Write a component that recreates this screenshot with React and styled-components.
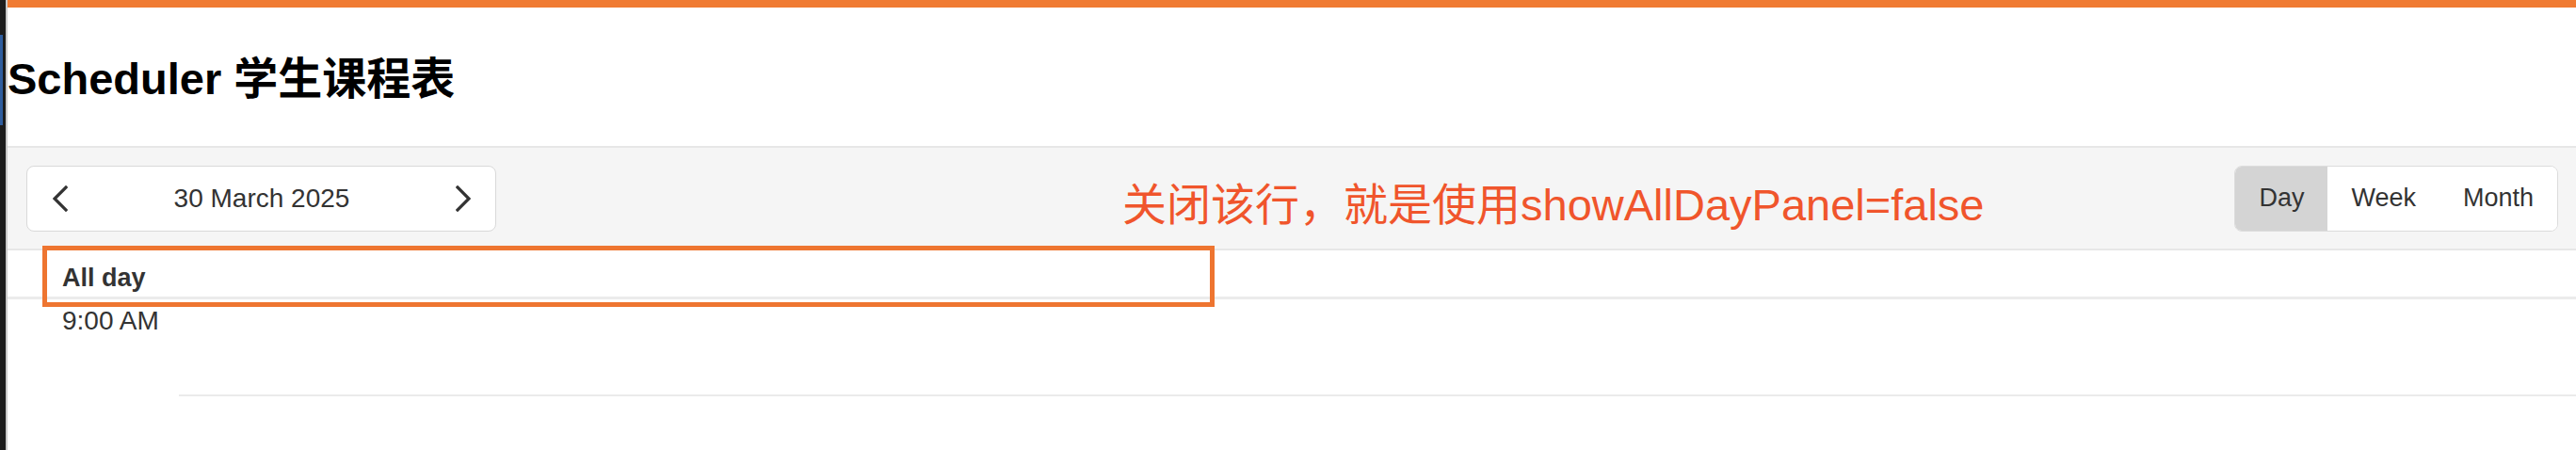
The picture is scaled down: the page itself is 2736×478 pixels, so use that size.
import React from "react";
import styled, { createGlobalStyle } from "styled-components";

const GlobalStyle = createGlobalStyle`
  html, body {
    margin: 0;
    padding: 0;
    background: #ffffff;
  }
  body {
    font-family: "Liberation Sans", "Noto Sans CJK SC", sans-serif;
    color: #333333;
  }
`;

const Page = styled.div`
  display: flex;
  width: 2736px;
  height: 478px;
  overflow: hidden;
`;

const WindowEdge = styled.div`
  width: 6px;
  flex-shrink: 0;
  background: #1c1c1c;
  position: relative;
  border-right: 2px solid #c9c9c9;
`;

const EdgeTab = styled.div`
  position: absolute;
  left: 0;
  top: 37px;
  width: 3px;
  height: 96px;
  background: #2f5d9e;
`;

const Main = styled.div`
  flex: 1;
  position: relative;
  display: flex;
  flex-direction: column;
`;

const TopBar = styled.div`
  height: 8px;
  background: #f07b33;
`;

const Header = styled.div`
  height: 147px;
  box-sizing: border-box;
  padding-top: 48px;
`;

const Title = styled.h1`
  margin: 0;
  font-size: 47px;
  line-height: 56px;
  font-weight: 700;
  color: #000000;
  font-family: "Liberation Sans", "Noto Sans CJK SC", sans-serif;
`;

const Toolbar = styled.div`
  position: relative;
  height: 111px;
  box-sizing: border-box;
  background: #f5f5f5;
  border-top: 2px solid #e7e7e7;
  border-bottom: 2px solid #e7e7e7;
  display: flex;
  align-items: center;
  justify-content: space-between;
  padding: 0 19px 0 20px;
`;

const Navigator = styled.div`
  width: 499px;
  height: 70px;
  box-sizing: border-box;
  background: #ffffff;
  border: 1px solid #d9d9d9;
  border-radius: 8px;
  display: flex;
  align-items: center;
  justify-content: space-between;
  padding: 0 26px 0 27px;
`;

const NavArrow = styled.button`
  border: none;
  background: none;
  padding: 0;
  width: 16px;
  height: 28px;
  display: flex;
  cursor: pointer;
`;

const DateLabel = styled.span`
  font-size: 28px;
  color: #333333;
`;

const Switcher = styled.div`
  display: flex;
  height: 70px;
  box-sizing: border-box;
  border: 1px solid #dcdcdc;
  border-radius: 8px;
  overflow: hidden;
  background: #ffffff;
`;

const ViewButton = styled.button`
  border: none;
  margin: 0;
  padding: 0 25px;
  font-family: "Liberation Sans", sans-serif;
  font-size: 27px;
  color: #333333;
  background: ${(p) => (p.$active ? "#d4d4d4" : "#ffffff")};
  cursor: pointer;
`;

const Note = styled.div`
  position: absolute;
  left: 1184px;
  top: 36px;
  font-size: 47px;
  line-height: 50px;
  color: #f0552c;
  white-space: nowrap;
  font-family: "Liberation Sans", "Noto Sans CJK SC", sans-serif;
`;

const AllDayRow = styled.div`
  height: 52px;
  box-sizing: border-box;
  border-bottom: 3px solid #ebebeb;
  padding: 14px 0 0 58px;
`;

const AllDayLabel = styled.span`
  font-size: 27px;
  line-height: 30px;
  font-weight: 700;
  color: #333333;
`;

const TimeRow = styled.div`
  display: flex;
`;

const TimeLabel = styled.div`
  width: 182px;
  flex-shrink: 0;
  box-sizing: border-box;
  padding: 7px 0 0 58px;
  font-size: 28px;
  line-height: 32px;
  color: #333333;
`;

const TimeCell = styled.div`
  flex: 1;
  height: 103px;
  box-sizing: border-box;
  border-bottom: 2px solid #ebebeb;
`;

const Highlight = styled.div`
  position: absolute;
  left: 37px;
  top: 261px;
  width: 1245px;
  height: 65px;
  box-sizing: border-box;
  border: 5px solid #ee7530;
  pointer-events: none;
`;

const Chevron = ({ dir }) => (
  <svg width="16" height="28" viewBox="0 0 16 28">
    <polyline
      points={dir === "left" ? "14,2 2,14 14,26" : "2,2 14,14 2,26"}
      fill="none"
      stroke="#333333"
      strokeWidth="3.2"
      strokeLinecap="square"
    />
  </svg>
);

const App = () => {
  return (
    <>
      <GlobalStyle />
      <Page>
        <WindowEdge>
          <EdgeTab />
        </WindowEdge>
        <Main>
          <TopBar />
          <Header>
            <Title>Scheduler 学生课程表</Title>
          </Header>
          <Toolbar>
            <Navigator>
              <NavArrow aria-label="previous">
                <Chevron dir="left" />
              </NavArrow>
              <DateLabel>30 March 2025</DateLabel>
              <NavArrow aria-label="next">
                <Chevron dir="right" />
              </NavArrow>
            </Navigator>
            <Note>关闭该行，就是使用showAllDayPanel=false</Note>
            <Switcher>
              <ViewButton $active>Day</ViewButton>
              <ViewButton>Week</ViewButton>
              <ViewButton>Month</ViewButton>
            </Switcher>
          </Toolbar>
          <AllDayRow>
            <AllDayLabel>All day</AllDayLabel>
          </AllDayRow>
          <TimeRow>
            <TimeLabel>9:00 AM</TimeLabel>
            <TimeCell />
          </TimeRow>
          <Highlight />
        </Main>
      </Page>
    </>
  );
};

export default App;
